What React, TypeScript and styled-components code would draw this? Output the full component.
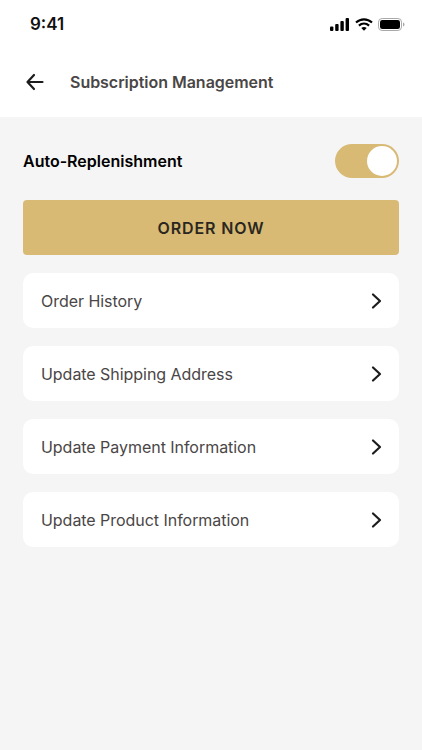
import React from 'react';
import styled, { createGlobalStyle } from 'styled-components';

const GlobalStyle = createGlobalStyle`
  html, body {
    margin: 0;
    padding: 0;
    background: #f5f5f5;
    font-family: Inter, "Liberation Sans", sans-serif;
  }
`;

const links = [
  'Order History',
  'Update Shipping Address',
  'Update Payment Information',
  'Update Product Information',
];

function App() {
  return (
    <Page>
      <GlobalStyle />
      <Header>
        <StatusBar>
          <Time>9:41</Time>
          <StatusIcons>
            <svg width="20" height="13" viewBox="0 0 20 13" fill="#000">
              <rect x="0" y="8.5" width="3.4" height="4.5" rx="1" />
              <rect x="5.2" y="6" width="3.4" height="7" rx="1" />
              <rect x="10.4" y="3" width="3.4" height="10" rx="1" />
              <rect x="15.6" y="0" width="3.4" height="13" rx="1" />
            </svg>
            <svg width="18" height="13" viewBox="0 0 18 13" fill="none" stroke="#000" strokeWidth="2.1">
              <path d="M1 4.6C5.6 0.3 12.4 0.3 17 4.6" />
              <path d="M3.9 7.6C6.9 4.9 11.1 4.9 14.1 7.6" />
              <path d="M9 12.8L6.3 10C7.9 8.7 10.1 8.7 11.7 10Z" fill="#000" stroke="none" />
            </svg>
            <svg width="27" height="13" viewBox="0 0 27 13" fill="none">
              <rect x="0.5" y="0.5" width="23" height="12" rx="3.6" stroke="#a9a9a9" />
              <rect x="2" y="2" width="20" height="9" rx="2.3" fill="#000" />
              <path d="M25 4.5C25.9 4.8 26.5 5.6 26.5 6.5C26.5 7.4 25.9 8.2 25 8.5Z" fill="#a9a9a9" />
            </svg>
          </StatusIcons>
        </StatusBar>
        <NavBar>
          <BackIcon width="24" height="24" viewBox="0 0 24 24" fill="none" stroke="#1c1c1c" strokeWidth="2.2" strokeLinecap="round" strokeLinejoin="round">
            <path d="M19.5 12H5" />
            <path d="M11 5L4.5 12L11 19" />
          </BackIcon>
          <Title>Subscription Management</Title>
        </NavBar>
      </Header>
      <Content>
        <ToggleRow>
          <ToggleLabel>Auto-Replenishment</ToggleLabel>
          <Toggle role="switch" aria-checked="true">
            <Knob />
          </Toggle>
        </ToggleRow>
        <OrderButton>ORDER NOW</OrderButton>
        {links.map(item => (
          <LinkRow key={item}>
            <span>{item}</span>
            <svg width="24" height="24" viewBox="0 0 24 24" fill="none" stroke="#1c1c1c" strokeWidth="2.2" strokeLinecap="round" strokeLinejoin="round">
              <path d="M9 5.5L16 12L9 18.5" />
            </svg>
          </LinkRow>
        ))}
      </Content>
    </Page>
  );
}

export default App;

const Page = styled.div`
  width: 422px;
  height: 750px;
  overflow: hidden;
  display: flex;
  flex-direction: column;
  background: #f5f5f5;
`;

const Header = styled.header`
  height: 117px;
  background: #fff;
  flex-shrink: 0;
`;

const StatusBar = styled.div`
  height: 48px;
  padding: 0 17px 0 30px;
  display: flex;
  align-items: center;
  justify-content: space-between;
`;

const Time = styled.span`
  font-size: 17px;
  font-weight: 600;
  color: #111;
`;

const StatusIcons = styled.div`
  display: flex;
  align-items: center;
  gap: 5px;
`;

const NavBar = styled.div`
  height: 68px;
  padding-left: 23px;
  display: flex;
  align-items: center;
  gap: 23px;
`;

const BackIcon = styled.svg`
  flex-shrink: 0;
`;

const Title = styled.h1`
  margin: 0;
  font-size: 16px;
  font-weight: 600;
  letter-spacing: -0.03px;
  color: #4a4646;
`;

const Content = styled.main`
  padding: 27px 23px 0;
  display: flex;
  flex-direction: column;
`;

const ToggleRow = styled.div`
  height: 34px;
  margin-bottom: 22px;
  display: flex;
  align-items: center;
  justify-content: space-between;
`;

const ToggleLabel = styled.span`
  font-size: 16px;
  font-weight: 600;
  color: #000;
`;

const Toggle = styled.div`
  width: 64px;
  height: 34px;
  box-sizing: border-box;
  padding: 2px;
  border-radius: 17px;
  background: #d8ba75;
  display: flex;
  justify-content: flex-end;
`;

const Knob = styled.div`
  width: 30px;
  height: 30px;
  border-radius: 50%;
  background: #fff;
`;

const OrderButton = styled.button`
  height: 55px;
  margin-bottom: 18px;
  padding: 0;
  border: 0;
  border-radius: 4px;
  background: #d8ba75;
  color: #2b2720;
  font-family: inherit;
  font-size: 16px;
  font-weight: 600;
  letter-spacing: 0.9px;
`;

const LinkRow = styled.div`
  height: 55px;
  margin-bottom: 18px;
  padding: 0 11px 0 18px;
  border-radius: 10px;
  background: #fff;
  display: flex;
  align-items: center;
  justify-content: space-between;
  font-size: 16px;
  letter-spacing: -0.04px;
  color: #4a4646;
`;
